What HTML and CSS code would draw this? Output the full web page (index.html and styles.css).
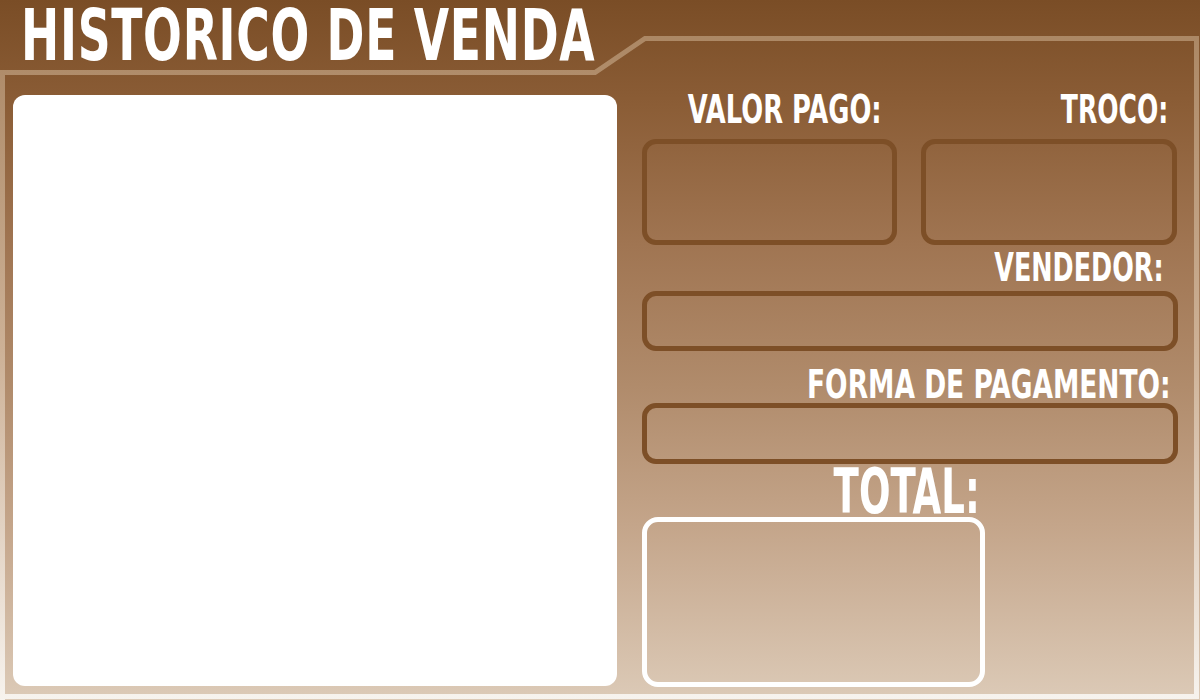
FILE: index.html
```html
<!DOCTYPE html>
<html lang="pt">
<head>
<meta charset="utf-8">
<title>Historico de Venda</title>
<link rel="stylesheet" href="styles.css">
</head>
<body>
<div class="screen">
  <svg class="frame" width="1200" height="700" viewBox="0 0 1200 700" aria-hidden="true">
    <defs>
      <linearGradient id="frameGrad" x1="0" y1="0" x2="0" y2="700" gradientUnits="userSpaceOnUse">
        <stop offset="0" stop-color="#a8835f"/>
        <stop offset="0.5" stop-color="#cdb196"/>
        <stop offset="1" stop-color="#f7f3ee"/>
      </linearGradient>
    </defs>
    <path d="M2.5 700 V72.5 H595 L645 38.5 H1196.5 V696.5 H0" fill="none" stroke="url(#frameGrad)" stroke-width="5"/>
  </svg>

  <header class="title-bar">
    <h1 class="title"><span class="squeeze">HISTORICO DE VENDA</span></h1>
  </header>

  <main class="content">
    <section class="history-panel"></section>

    <section class="details">
      <div class="pair">
        <div class="field">
          <div class="label label-paid"><span class="squeeze">VALOR PAGO:</span></div>
          <div class="box box-tall"></div>
        </div>
        <div class="field">
          <div class="label label-change"><span class="squeeze">TROCO:</span></div>
          <div class="box box-tall"></div>
        </div>
      </div>

      <div class="field field-seller">
        <div class="label label-seller"><span class="squeeze">VENDEDOR:</span></div>
        <div class="box box-row"></div>
      </div>

      <div class="field field-payment">
        <div class="label label-payment"><span class="squeeze">FORMA DE PAGAMENTO:</span></div>
        <div class="box box-row"></div>
      </div>

      <div class="total">
        <div class="total-label"><span class="squeeze">TOTAL:</span></div>
        <div class="total-box"></div>
      </div>
    </section>
  </main>
</div>
</body>
</html>
```

FILE: styles.css
```css
html, body {
  margin: 0;
  padding: 0;
}

body {
  width: 1200px;
  height: 700px;
  overflow: hidden;
  font-family: "Liberation Sans Narrow", "DejaVu Sans Condensed", "Liberation Sans", sans-serif;
  font-weight: 700;
  color: #ffffff;
}

.screen {
  position: relative;
  width: 1200px;
  height: 700px;
  overflow: hidden;
  background: linear-gradient(180deg,
    #7a4d26 0%,
    #8b5d36 15%,
    #a07552 35%,
    #b08b6b 55%,
    #c4a58a 75%,
    #dccab7 100%);
}

.frame {
  position: absolute;
  left: 0;
  top: 0;
  pointer-events: none;
}

.title-bar {
  height: 71px;
  padding-left: 21px;
}

.title {
  margin: 0;
  font-size: 71px;
  line-height: 71px;
  font-weight: 700;
  white-space: nowrap;
}

.squeeze {
  display: inline-block;
  white-space: nowrap;
}

.title .squeeze {
  transform: scaleX(0.715);
  transform-origin: left center;
  letter-spacing: 1px;
}

.content {
  display: grid;
  grid-template-columns: 604px 536px;
  column-gap: 25px;
  padding: 24px 22px 0 13px;
}

.history-panel {
  height: 591px;
  background: #ffffff;
  border-radius: 12px;
}

.details {
  display: flex;
  flex-direction: column;
}

.pair {
  display: grid;
  grid-template-columns: 255px 256px;
  column-gap: 24px;
}

.field {
  display: flex;
  flex-direction: column;
}

.label {
  display: flex;
  justify-content: flex-end;
  font-size: 39px;
  line-height: 30px;
  padding-right: 9px;
  white-space: nowrap;
}

.label .squeeze {
  transform-origin: right center;
  transform: scaleX(0.73);
}

.label-paid {
  padding-right: 15px;
}

.label-paid .squeeze {
  transform: scaleX(0.735);
}

.label-change .squeeze {
  transform: scaleX(0.715);
}

.label-seller {
  padding-right: 14px;
}

.label-seller .squeeze {
  transform: scaleX(0.725);
}

.label-payment {
  padding-right: 7px;
}

.label-payment .squeeze {
  transform: scaleX(0.755);
}

.box {
  box-sizing: border-box;
  border: 5px solid #7d4f27;
  border-radius: 14px;
}

.box-tall {
  margin-top: 14px;
  height: 106px;
}

.field-seller {
  margin-top: 8px;
}

.field-seller .box-row {
  margin-top: 8px;
  height: 60px;
}

.field-payment {
  margin-top: 19px;
}

.field-payment .box-row {
  margin-top: 3px;
  height: 61px;
}

.total {
  width: 343px;
  margin-top: 5px;
  display: flex;
  flex-direction: column;
}

.total-label {
  display: flex;
  justify-content: flex-end;
  font-size: 62px;
  line-height: 46px;
  padding-right: 5px;
  white-space: nowrap;
}

.total-label .squeeze {
  transform-origin: right center;
  transform: scaleX(0.665);
}

.total-box {
  box-sizing: border-box;
  margin-top: 2px;
  height: 170px;
  border: 5px solid #ffffff;
  border-radius: 16px;
}
```
